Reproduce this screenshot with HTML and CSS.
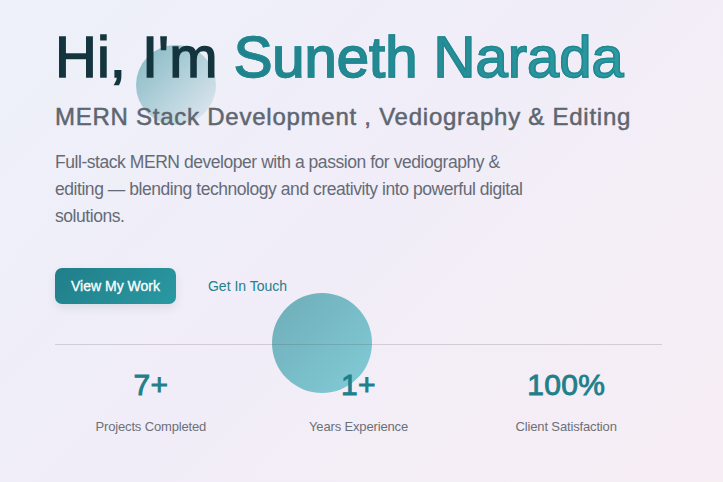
FILE: index.html
```html
<!DOCTYPE html>
<html lang="en">
<head>
<meta charset="utf-8">
<title>Suneth Narada</title>
<link rel="stylesheet" href="styles.css">
</head>
<body>
<main class="hero">
  <span class="blob blob-one"></span>
  <span class="blob blob-two"></span>
  <div class="content">
    <h1 class="title"><span class="greet">Hi, I'm</span> <span class="name">Suneth Narada</span></h1>
    <h2 class="subtitle">MERN Stack Development , Vediography &amp; Editing</h2>
    <p class="intro">Full-stack MERN developer with a passion for vediography &amp; editing — blending technology and creativity into powerful digital solutions.</p>
    <div class="actions">
      <a class="btn btn-primary" href="#work">View My Work</a>
      <a class="btn btn-link" href="#contact">Get In Touch</a>
    </div>
    <div class="stats">
      <div class="stat">
        <div class="stat-value">7+</div>
        <div class="stat-label">Projects Completed</div>
      </div>
      <div class="stat">
        <div class="stat-value">1+</div>
        <div class="stat-label">Years Experience</div>
      </div>
      <div class="stat">
        <div class="stat-value">100%</div>
        <div class="stat-label">Client Satisfaction</div>
      </div>
    </div>
  </div>
</main>
</body>
</html>
```
FILE: styles.css
```css
* { box-sizing: border-box; }
html, body { margin: 0; padding: 0; }
body {
  width: 723px;
  height: 482px;
  overflow: hidden;
  font-family: "Liberation Sans", Arial, sans-serif;
  background: linear-gradient(135deg, #edf1f9 0%, #f1edf8 50%, #f7eef4 100%);
}
.hero {
  position: relative;
  height: 482px;
  padding: 25px 0 0 55px;
}
.blob {
  position: absolute;
  border-radius: 50%;
  z-index: 0;
}
.blob-one {
  left: 136px;
  top: 45px;
  width: 80px;
  height: 80px;
  background: linear-gradient(135deg, rgba(31,133,144,0.52) 0%, rgba(31,133,144,0.05) 100%);
}
.blob-two {
  left: 272px;
  top: 293px;
  width: 100px;
  height: 100px;
  background: linear-gradient(135deg, rgba(31,133,144,0.62) 0%, rgba(54,182,194,0.6) 100%);
}
.content {
  position: relative;
  z-index: 1;
  width: 607px;
}
.title {
  margin: 0;
  font-size: 58px;
  line-height: 64px;
  font-weight: 400;
  color: #14353e;
  white-space: nowrap;
}
.greet {
  -webkit-text-stroke: 1.5px #14353e;
}
.name {
  color: #22888f;
  -webkit-text-stroke: 1.5px #22888f;
  background: linear-gradient(90deg, #1f818c, #2b9aa3);
  -webkit-background-clip: text;
  background-clip: text;
  -webkit-text-fill-color: transparent;
}
.subtitle {
  margin: 12px 0 0;
  font-size: 24px;
  line-height: 32px;
  font-weight: 400;
  letter-spacing: 0.75px;
  color: #5e6670;
  -webkit-text-stroke: 0.5px #5e6670;
  white-space: nowrap;
}
.intro {
  margin: 16px 0 0;
  max-width: 485px;
  font-size: 17.5px;
  line-height: 27px;
  letter-spacing: -0.45px;
  color: #656b76;
}
.actions {
  margin-top: 38px;
  display: flex;
  align-items: center;
  gap: 16px;
}
.btn {
  display: inline-flex;
  align-items: center;
  height: 36px;
  font-size: 14px;
  text-decoration: none;
  white-space: nowrap;
}
.btn-primary {
  padding: 0 16px;
  border-radius: 7px;
  background: linear-gradient(135deg, #207e89, #2a99a2);
  color: #ffffff;
  -webkit-text-stroke: 0.3px #ffffff;
  box-shadow: 0 4px 10px rgba(40, 60, 90, 0.1);
}
.btn-link {
  padding: 0 16px;
  color: #23808b;
}
.stats {
  margin-top: 40px;
  border-top: 1px solid rgba(90, 70, 80, 0.2);
  padding-top: 22px;
  display: grid;
  grid-template-columns: repeat(3, 1fr);
  gap: 16px;
  text-align: center;
}
.stat-value {
  font-size: 30px;
  line-height: 36px;
  font-weight: 400;
  letter-spacing: 0.3px;
  color: #1f808b;
  -webkit-text-stroke: 0.9px #1f808b;
}
.stat-label {
  margin-top: 14px;
  font-size: 13px;
  line-height: 20px;
  letter-spacing: -0.15px;
  color: #6b7079;
}
```
